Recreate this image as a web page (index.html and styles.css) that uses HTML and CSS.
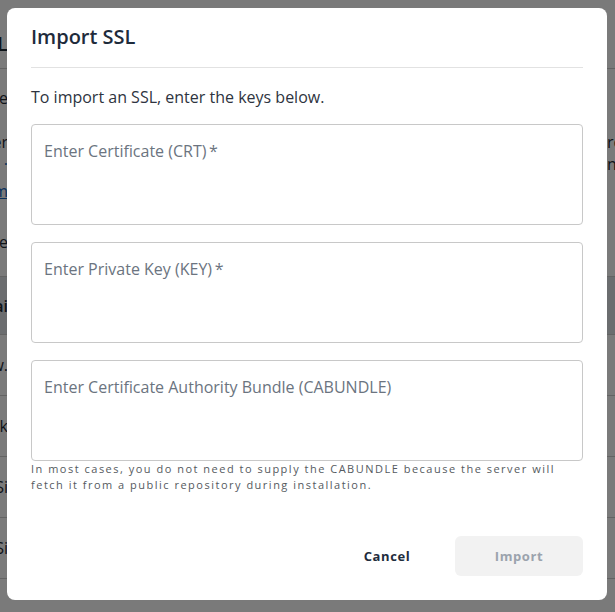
FILE: index.html
```html
<!DOCTYPE html>
<html lang="en">
<head>
<meta charset="utf-8">
<title>Import SSL</title>
<link rel="stylesheet" href="styles.css">
</head>
<body>
<div class="page">
  <div class="bg-row bg-head"><span class="frag-l">SSL</span><span class="frag-r"></span></div>
  <div class="bg-row bg-text1"><span class="frag-l">Manage</span><span class="frag-r"></span></div>
  <div class="bg-row bg-text2"><span class="frag-l">Enter</span><span class="frag-r">ro</span></div>
  <div class="bg-row bg-text3"><span class="frag-l link">·</span><span class="frag-r">n</span></div>
  <div class="bg-row bg-text4"><span class="frag-l link ul">Form</span><span class="frag-r"></span></div>
  <div class="bg-row bg-text5 bordered"><span class="frag-l">Store</span><span class="frag-r"></span></div>
  <div class="bg-row bg-band bordered"><span class="frag-l">Domai</span><span class="frag-r"></span></div>
  <div class="bg-row bg-cell bordered"><span class="frag-l">www.</span><span class="frag-r"></span></div>
  <div class="bg-row bg-cell bordered"><span class="frag-l">bak</span><span class="frag-r"></span></div>
  <div class="bg-row bg-cell bordered"><span class="frag-l">Si</span><span class="frag-r"></span></div>
  <div class="bg-row bg-cell bordered"><span class="frag-l">Si</span><span class="frag-r"></span></div>
</div>
<div class="overlay"></div>
<div class="modal" role="dialog" aria-labelledby="modal-title">
  <h2 class="modal-title" id="modal-title">Import SSL</h2>
  <div class="modal-body">
    <p class="intro">To import an SSL, enter the keys below.</p>
    <textarea class="key-input" placeholder="Enter Certificate (CRT)&#8201;*"></textarea>
    <textarea class="key-input" placeholder="Enter Private Key (KEY)&#8201;*"></textarea>
    <textarea class="key-input last" placeholder="Enter Certificate Authority Bundle (CABUNDLE)"></textarea>
    <p class="help">In most cases, you do not need to supply the CABUNDLE because the server will fetch it from a public repository during installation.</p>
  </div>
  <div class="modal-footer">
    <button class="btn btn-cancel" type="button">Cancel</button>
    <button class="btn btn-import" type="button" disabled>Import</button>
  </div>
</div>
</body>
</html>
```

FILE: styles.css
```css
* { box-sizing: border-box; }

html, body {
  margin: 0;
  padding: 0;
  height: 100%;
  overflow: hidden;
}

body {
  background: #ffffff;
  font-family: "Open Sans", "Noto Sans", sans-serif;
  color: #2b3442;
}

/* background page (dimmed) */
.page {
  display: flex;
  flex-direction: column;
  width: 100%;
}

.bg-row {
  display: flex;
  justify-content: space-between;
  align-items: center;
  font-size: 16px;
  color: #1f2a36;
}

.frag-l {
  width: 8px;
  overflow: hidden;
  display: flex;
  justify-content: flex-end;
  white-space: nowrap;
}

.frag-r {
  width: 8px;
  overflow: hidden;
  white-space: nowrap;
}

.link { color: #1565c0; }
.ul { text-decoration: underline; }

.bg-head {
  height: 69px;
  border-bottom: 1px solid #cfcfcf;
  font-size: 20px;
  font-weight: 600;
  align-items: flex-end;
  padding-bottom: 11px;
}

.bg-text1 { height: 58px; }
.bg-text2 { height: 26px; align-items: flex-end; }
.bg-text3 { height: 22px; }
.bg-text4 { height: 32px; }
.bg-text5 { height: 70px; border-bottom: 1px solid #cfcfcf; }

.bg-band {
  height: 58px;
  background: #dfe3e8;
  border-bottom: 1px solid #cfcfcf;
  font-weight: 600;
}

.bg-cell {
  height: 61px;
  border-bottom: 1px solid #cfcfcf;
}

.overlay {
  position: fixed;
  inset: 0;
  background: rgba(0, 0, 0, 0.52);
}

/* modal */
.modal {
  position: fixed;
  left: 7px;
  top: 8px;
  width: 600px;
  height: 592px;
  background: #ffffff;
  border-radius: 8px;
  padding: 15px 24px 24px;
  display: flex;
  flex-direction: column;
}

.modal-title {
  margin: 0;
  font-size: 20px;
  line-height: 28px;
  font-weight: 600;
  color: #1e2b3b;
  padding-bottom: 16px;
  border-bottom: 1px solid #e2e2e2;
}

.modal-body {
  display: flex;
  flex-direction: column;
  padding-top: 17px;
  flex: 1;
}

.intro {
  margin: 0 0 15px;
  font-size: 16px;
  line-height: 24px;
  color: #2e3440;
}

.key-input {
  display: block;
  width: 100%;
  height: 101px;
  margin: 0 0 17px;
  padding: 14px 12px;
  border: 1px solid #c8c8c8;
  border-radius: 4px;
  resize: none;
  font-family: "Open Sans", "Noto Sans", sans-serif;
  font-size: 16px;
  line-height: 24px;
  color: #2e3440;
  background: #fff;
  outline: none;
}

.key-input::placeholder {
  color: #6b7480;
  opacity: 1;
}

.key-input.last { margin-bottom: 0; }

.help {
  margin: 0;
  font-size: 11px;
  line-height: 16px;
  letter-spacing: 1.5px;
  color: #555a60;
}

.modal-footer {
  display: flex;
  justify-content: flex-end;
  gap: 8px;
}

.btn {
  height: 40px;
  border: none;
  border-radius: 6px;
  font-family: "Open Sans", "Noto Sans", sans-serif;
  font-size: 13px;
  font-weight: 700;
  letter-spacing: 0.6px;
  cursor: pointer;
}

.btn-cancel {
  width: 120px;
  background: transparent;
  color: #1f2d3d;
}

.btn-import {
  width: 128px;
  background: #f2f2f2;
  color: #9ba3ad;
}
```
